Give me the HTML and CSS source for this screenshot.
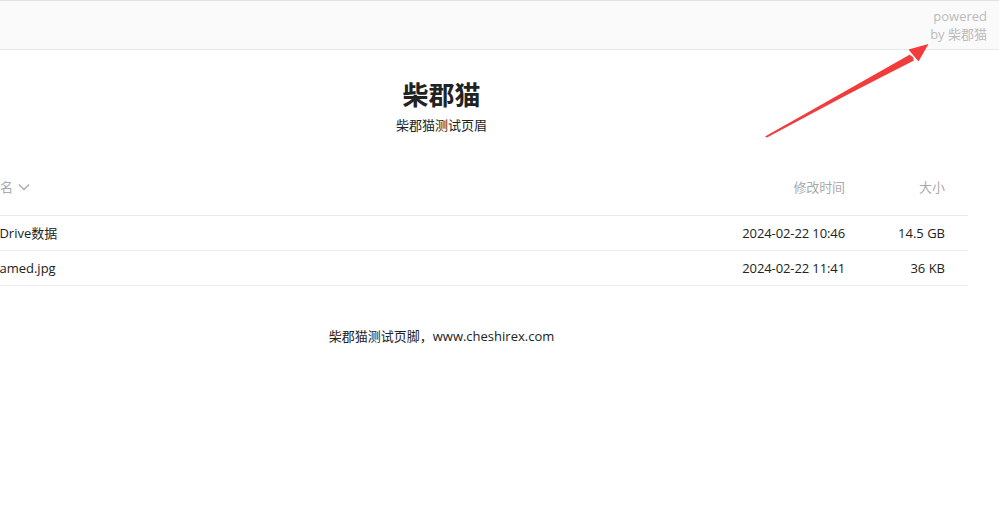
FILE: index.html
```html
<!DOCTYPE html>
<html lang="zh-CN">
<head>
<meta charset="utf-8">
<title>柴郡猫</title>
<link rel="stylesheet" href="styles.css">
</head>
<body>
<header class="topbar">
  <div class="powered">powered<br>by 柴郡猫</div>
</header>
<svg class="arrow" width="999" height="160" viewBox="0 0 999 160" aria-hidden="true">
  <polygon points="765,136.5 912,56 914,59 767,137.5" fill="#f23c3c"/>
  <polygon points="766,136 910,54.5 914,60.5" fill="#f23c3c"/>
  <polygon points="928.5,44 908.5,49.5 918.5,61.5" fill="#f23c3c"/>
</svg>
<main class="page">
  <h1 class="title">柴郡猫</h1>
  <p class="subtitle">柴郡猫测试页眉</p>
  <div class="list">
    <div class="row head">
      <div class="c-name">文件名 <svg class="chev" width="12" height="8" viewBox="0 0 12 8"><path d="M1 1.5 L6 6.5 L11 1.5" fill="none" stroke="#aaa" stroke-width="1.3"/></svg></div>
      <div class="c-date">修改时间</div>
      <div class="c-size">大小</div>
    </div>
    <div class="row">
      <div class="c-name">OneDrive数据</div>
      <div class="c-date">2024-02-22 10:46</div>
      <div class="c-size">14.5 GB</div>
    </div>
    <div class="row">
      <div class="c-name">Unnamed.jpg</div>
      <div class="c-date">2024-02-22 11:41</div>
      <div class="c-size">36 KB</div>
    </div>
  </div>
  <p class="footer">柴郡猫测试页脚，www.cheshirex.com</p>
</main>
</body>
</html>
```
FILE: styles.css
```css
html, body {
  margin: 0;
  padding: 0;
  background: #fff;
  overflow: hidden;
}
body {
  font-family: "Open Sans", "Noto Sans CJK SC", sans-serif;
  font-size: 13px;
  color: #222;
  width: 999px;
  height: 532px;
  position: relative;
}
.topbar {
  height: 48px;
  background: #fafafa;
  border-top: 1px solid #e3e3e3;
  border-bottom: 1px solid #e8e8e8;
  display: flex;
  justify-content: flex-end;
  align-items: center;
  padding-right: 12px;
}
.powered {
  text-align: right;
  color: #bbb;
  font-size: 13px;
  line-height: 18px;
}
.arrow {
  position: absolute;
  left: 0;
  top: 0;
  pointer-events: none;
}
.page {
  width: 1053px;
  margin-left: -85px;
}
.title {
  margin: 28px 0 0;
  text-align: center;
  font-size: 26px;
  line-height: 34px;
  font-weight: 700;
  color: #222;
}
.subtitle {
  margin: 3px 0 0;
  text-align: center;
  line-height: 20px;
  color: #222;
}
.list {
  margin-top: 25px;
}
.row {
  display: flex;
  align-items: center;
  height: 34px;
  line-height: 20px;
  padding-right: 23px;
  border-bottom: 1px solid #ebebeb;
  color: #222;
}
.row.head {
  height: 55px;
  color: #aaa;
}
.row.head > div {
  margin-top: -1px;
}
.c-name {
  flex: 1;
  padding-left: 59px;
  white-space: nowrap;
  display: flex;
  align-items: center;
  gap: 5px;
}
.chev {
  display: block;
}
.c-date {
  width: 160px;
  text-align: right;
  letter-spacing: -0.1px;
}
.c-size {
  width: 100px;
  text-align: right;
}
.footer {
  margin: 40px 0 0;
  text-align: center;
  line-height: 20px;
  color: #222;
}
```
